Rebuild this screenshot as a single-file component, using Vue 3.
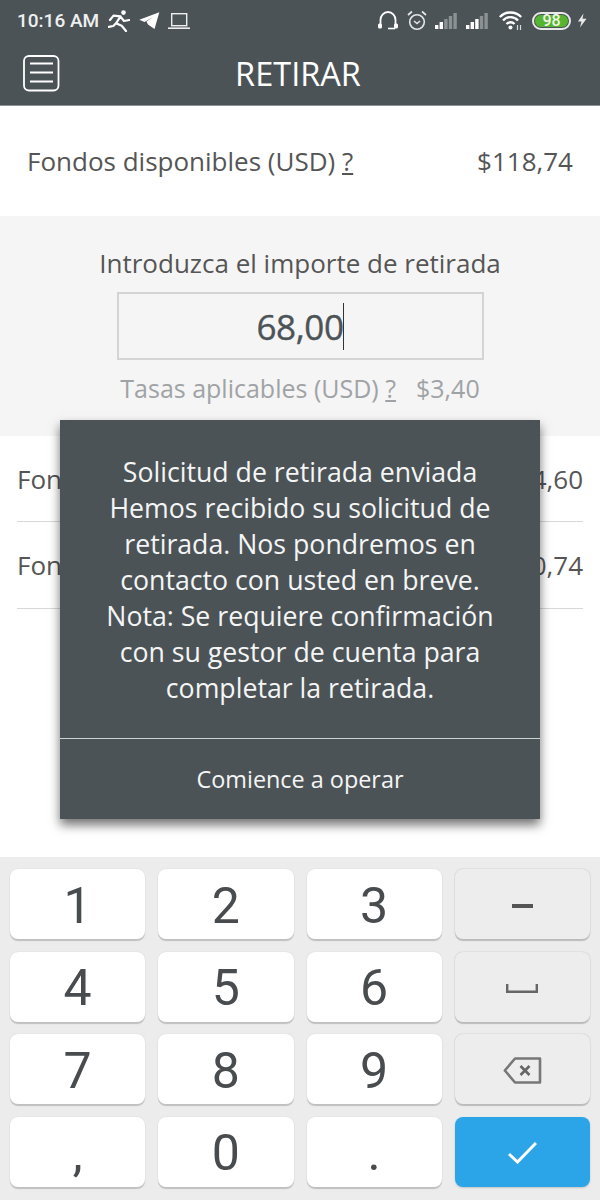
<template>
  <div class="screen">
    <div class="topbar">
      <div class="status">
        <div class="status-left">
          <span class="time">10:16 AM</span>
          <svg width="22" height="22" viewBox="0 0 22 22" class="ic-run">
            <circle cx="15.5" cy="2.6" r="2.3" fill="#fff" />
            <path d="M2 10 L5.5 5.6 L12.5 6.4 L8 13.3 L13.7 15.7 L18 21 M12.5 6.6 L16 11 L21.3 10 M8 13.3 L5.3 16 L0.7 16.8" fill="none" stroke="#fff" stroke-width="2.2" stroke-linejoin="round" stroke-linecap="round" />
          </svg>
          <svg width="22" height="18" viewBox="0 0 22 18" class="ic-plane">
            <path d="M1.3 7.7 L21.3 0.3 L16.5 17 L10 12.5 L8.5 9.5 L15 5 L6.5 10 Z" fill="#fff" />
          </svg>
          <svg width="22" height="18" viewBox="0 0 22 18" class="ic-laptop">
            <rect x="3.7" y="1.7" width="15" height="12" fill="none" stroke="#eee" stroke-width="1.4" />
            <path d="M0 16.2 H22" stroke="#eee" stroke-width="1.6" />
          </svg>
        </div>
        <div class="status-right">
          <svg width="22" height="20" viewBox="0 0 22 20">
            <path d="M3.5 15 V9 A7.5 8 0 0 1 18.5 9 V15" fill="none" stroke="#fff" stroke-width="1.8" />
            <rect x="1" y="12.5" width="4" height="5" rx="1.5" fill="#fff" />
            <rect x="17" y="12.5" width="4" height="5" rx="1.5" fill="#fff" />
            <path d="M11 17.5 H18" stroke="#fff" stroke-width="1.6" />
          </svg>
          <svg width="20" height="21" viewBox="0 0 20 21">
            <circle cx="10" cy="12" r="7.3" fill="none" stroke="#e4e6e6" stroke-width="1.6" />
            <path d="M7 11 L10 13.5 L13 11" fill="none" stroke="#e4e6e6" stroke-width="1.5" />
            <path d="M1 5 L5 1.5 M19 5 L15 1.5" stroke="#e4e6e6" stroke-width="1.7" />
          </svg>
          <svg v-for="lit in [2, 3]" :key="lit" width="23" height="17" viewBox="0 0 23 17">
            <rect
              v-for="(h, i) in [4, 7, 10, 13, 16]"
              :key="i"
              :x="i * 4.6"
              :y="17 - h"
              width="3.4"
              :height="h"
              :fill="i < lit ? '#fff' : '#8b9092'"
            />
          </svg>
          <svg width="24" height="19" viewBox="0 0 24 19" class="wifi">
            <path d="M0.8 6 A15 15 0 0 1 22.2 6 M4 9.5 A10 10 0 0 1 19 9.5 M7.5 13 A5.5 5.5 0 0 1 15.5 13" fill="none" stroke="#fff" stroke-width="2.3" />
            <circle cx="11.5" cy="16.5" r="2" fill="#fff" />
            <path d="M18.5 14 V19 M21.5 14 V19" stroke="#d5d8d8" stroke-width="1.2" />
          </svg>
          <span class="battery"><span class="battery-fill">98</span></span>
          <svg width="10" height="15" viewBox="0 0 10 15" class="bolt">
            <path d="M6.5 0.5 L1 8.5 H4.5 L3 14.5 L9.5 5.8 H5.5 Z" fill="#e8eaea" />
          </svg>
        </div>
      </div>
      <div class="title-row">
        <svg width="37" height="37" viewBox="0 0 37 37" class="menu">
          <rect x="1" y="1" width="34.5" height="34.5" rx="5" fill="none" stroke="#fff" stroke-width="1.8" />
          <path d="M7 8.5 H30 M7 17.5 H30 M7 26.5 H30" stroke="#fff" stroke-width="1.8" />
        </svg>
        <h1>RETIRAR</h1>
      </div>
    </div>

    <div class="available">
      <span>Fondos disponibles (USD) <u>?</u></span>
      <span>$118,74</span>
    </div>

    <div class="amount">
      <div class="amount-label">Introduzca el importe de retirada</div>
      <div class="amount-input">68,00<i class="caret"></i></div>
      <div class="fees">
        <span>Tasas aplicables (USD) <u>?</u></span>
        <span>$3,40</span>
      </div>
    </div>

    <div class="rows">
      <div class="row" v-for="row in rows" :key="row.value">
        <span>{{ row.label }}</span>
        <span>{{ row.value }}</span>
      </div>
    </div>

    <div class="keyboard">
      <button v-for="key in keys" :key="key.id" class="key" :class="key.kind">
        <template v-if="key.text">{{ key.text }}</template>
        <svg v-else-if="key.id === 'minus'" width="21" height="4" viewBox="0 0 21 4">
          <rect width="21" height="4" fill="#555" />
        </svg>
        <svg v-else-if="key.id === 'space'" width="32" height="9" viewBox="0 0 32 9">
          <path d="M1.2 0 V7.8 H30.8 V0" fill="none" stroke="#666" stroke-width="2.4" />
        </svg>
        <svg v-else-if="key.id === 'back'" width="39" height="27" viewBox="0 0 39 27">
          <path d="M12 1.5 H37 V25.5 H12 L1.8 13.5 Z" fill="none" stroke="#777" stroke-width="2.6" stroke-linejoin="round" />
          <path d="M17.5 9 L26.5 18 M26.5 9 L17.5 18" stroke="#666" stroke-width="2.6" />
        </svg>
        <svg v-else width="29" height="22" viewBox="0 0 29 22">
          <path d="M1 12 L9.5 20 L28 1" fill="none" stroke="#fff" stroke-width="3" />
        </svg>
      </button>
    </div>

    <div class="dialog">
      <div class="dialog-body">
        <p>Solicitud de retirada enviada</p>
        <p>Hemos recibido su solicitud de retirada. Nos pondremos en contacto con usted en breve.</p>
        <p>Nota: Se requiere confirmación con su gestor de cuenta para completar la retirada.</p>
      </div>
      <div class="dialog-action">Comience a operar</div>
    </div>
  </div>
</template>

<script setup>
const rows = [
  { label: 'Fondos', value: '$64,60' },
  { label: 'Fondos', value: '$50,74' },
]

const keys = [
  { id: '1', text: '1', kind: 'digit' },
  { id: '2', text: '2', kind: 'digit' },
  { id: '3', text: '3', kind: 'digit' },
  { id: 'minus', kind: 'fn' },
  { id: '4', text: '4', kind: 'digit' },
  { id: '5', text: '5', kind: 'digit' },
  { id: '6', text: '6', kind: 'digit' },
  { id: 'space', kind: 'fn' },
  { id: '7', text: '7', kind: 'digit' },
  { id: '8', text: '8', kind: 'digit' },
  { id: '9', text: '9', kind: 'digit' },
  { id: 'back', kind: 'fn' },
  { id: 'comma', text: ',', kind: 'digit' },
  { id: '0', text: '0', kind: 'digit' },
  { id: 'dot', text: '.', kind: 'digit' },
  { id: 'ok', kind: 'ok' },
]
</script>

<style scoped>
.screen {
  position: relative;
  width: 600px;
  height: 1200px;
  display: flex;
  flex-direction: column;
  overflow: hidden;
  background: #fff;
  color: #555;
  font-family: "Open Sans", sans-serif;
}

.topbar {
  height: 105px;
  background: #4c5357;
  color: #fff;
  border-bottom: 1px solid #8d9295;
  box-sizing: content-box;
  flex-shrink: 0;
}

.status {
  height: 41px;
  padding: 0 13px 0 17px;
  display: flex;
  justify-content: space-between;
  align-items: center;
  box-sizing: border-box;
}

.status-left {
  display: flex;
  align-items: center;
}

.time {
  font-family: Roboto, sans-serif;
  font-weight: 500;
  font-size: 19px;
  color: #eef0f0;
  margin-right: 9px;
}

.ic-plane {
  margin-left: 8px;
}

.ic-laptop {
  margin-left: 8px;
}

.status-right {
  display: flex;
  align-items: center;
  gap: 8px;
}

.wifi {
  margin-left: 2px;
}

.battery {
  width: 39px;
  height: 18px;
  margin-left: 1px;
  border: 2px solid #e8eaea;
  border-radius: 9px;
  box-sizing: border-box;
  display: flex;
  padding: 1px;
}

.battery-fill {
  flex: 1;
  background: #55b52f;
  border-radius: 6px;
  color: #f2f6e8;
  font-family: Roboto, sans-serif;
  font-weight: 500;
  font-size: 16px;
  line-height: 12px;
  text-align: center;
}

.bolt {
  margin-left: -2px;
}

.title-row {
  height: 64px;
  position: relative;
  display: flex;
  align-items: center;
  justify-content: center;
}

.menu {
  position: absolute;
  left: 23px;
  top: 14px;
}

h1 {
  margin: 0 4px 0 0;
  font-weight: 400;
  font-size: 32.5px;
  color: #fff;
}

.available {
  height: 110px;
  padding: 0 27px;
  display: flex;
  justify-content: space-between;
  align-items: center;
  font-size: 26px;
  flex-shrink: 0;
}

.amount {
  height: 220px;
  background: #f5f5f5;
  display: flex;
  flex-direction: column;
  align-items: center;
  flex-shrink: 0;
}

.amount-label {
  font-size: 26px;
  margin-top: 30px;
  line-height: 34px;
}

.amount-input {
  width: 367px;
  height: 68px;
  margin-top: 12px;
  box-sizing: border-box;
  border: 2px solid #d4d4d4;
  display: flex;
  align-items: center;
  justify-content: center;
  font-size: 35px;
  color: #4c5357;
  letter-spacing: -0.4px;
  -webkit-text-stroke: 0.4px #4c5357;
}

.caret {
  width: 1px;
  height: 47px;
  margin-left: -1px;
  background: #333;
}

.fees {
  display: flex;
  gap: 20px;
  margin-top: 11px;
  font-size: 25px;
  line-height: 34px;
  color: #a0a3a5;
}

.rows {
  flex: 1;
  padding: 0 17px;
}

.row {
  height: 85px;
  display: flex;
  justify-content: space-between;
  align-items: center;
  border-bottom: 1px solid #d8d8d8;
  font-size: 26px;
  white-space: nowrap;
}

.row + .row {
  height: 86px;
}

.keyboard {
  height: 343px;
  flex-shrink: 0;
  box-sizing: border-box;
  padding: 12px 10px 13px;
  background: #ececec;
  display: grid;
  grid-template-columns: repeat(4, 1fr);
  grid-auto-rows: 1fr;
  gap: 12.5px 13px;
}

.key {
  margin: 0;
  padding: 3px 0 0;
  display: flex;
  align-items: center;
  justify-content: center;
  border: 0;
  border-radius: 8px;
  font-family: Roboto, sans-serif;
  font-size: 50px;
  font-weight: 400;
  color: #484c4f;
  background: #fff;
  box-shadow: 0 0 1px #c4c4c4, 0 2px 1px #c0c0c0;
}

.fn {
  background: #ededed;
  box-shadow: 0 0 1.5px #b8b8b8, 0 2px 1px #bcbcbc;
}

.ok {
  background: #2ca4e8;
  box-shadow: 0 1px 2px #c4c4c4;
}

.dialog {
  position: absolute;
  left: 60px;
  top: 420px;
  width: 480px;
  height: 399px;
  background: #4c5357;
  color: #f4f5f5;
  box-shadow: 0 6px 10px rgba(0, 0, 0, 0.55);
  display: flex;
  flex-direction: column;
}

.dialog-body {
  height: 319px;
  padding: 33.5px 30px 0;
  box-sizing: border-box;
  border-bottom: 1px solid #cfd2d3;
  text-align: center;
  font-size: 26.7px;
  line-height: 36px;
}

.dialog-body p {
  margin: 0;
}

.dialog-action {
  flex: 1;
  display: flex;
  align-items: center;
  justify-content: center;
  font-size: 23.4px;
}
</style>
